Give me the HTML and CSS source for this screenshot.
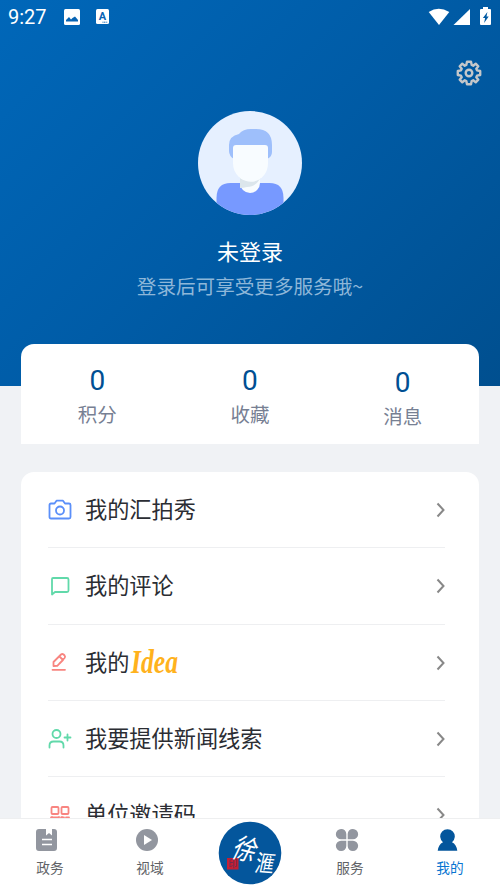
FILE: index.html
```html
<!DOCTYPE html>
<html lang="zh-CN">
<head>
<meta charset="utf-8">
<meta name="viewport" content="width=device-width">
<title>我的</title>
<link rel="stylesheet" href="styles.css">
</head>
<body>
<div class="app">
  <main class="content">
    <header class="hero">
      <div class="status">
        <span class="time">9:27</span>
        <svg class="photo" width="16" height="16" viewBox="0 0 16 16"><rect width="16" height="16" rx="1.5" fill="#fff"/><path d="M2 12.500V11l3-3 2 2.500 1.500-1.500L11 7.500l3 3.500v1.500z" fill="#0764b4"/></svg>
        <svg class="letter" width="13" height="15" viewBox="0 0 13 15"><rect width="13" height="15" rx="1.5" fill="#fff"/><text x="6.500" y="10.500" text-anchor="middle" class="letter-text">A</text><path d="M6.500 13.200h5" stroke="#0764b4" stroke-width="1" stroke-dasharray="1 .6"/></svg>
        <svg class="signals" width="64" height="20" viewBox="0 0 64 20" fill="#fff"><path d="M.7 5.100Q10.500-1.800 21.300 5.100L11 17.900z"/><path d="M42 2v16H25.500z"/><path fill-rule="evenodd" d="M55 0h5v2h2q1 0 1 1v14q0 1-1 1h-9q-1 0-1-1V3q0-1 1-1h2zm4.400 5-4.500 6h2.200l-1 5 4.600-6.500h-2.200z"/></svg>
      </div>
      <svg class="gear" width="26" height="26" viewBox="-13 -13 26 26" fill="none" stroke="#c4c7ca" stroke-width="2.400" stroke-linejoin="round"><path d="M-2-11.200H2L2.700-8 4.200-7.300 6.700-9.300 9.300-6.700 7.300-4.200 8-2.700 11.200-2V2L8 2.700 7.300 4.200 9.300 6.700 6.700 9.300 4.200 7.300 2.700 8 2 11.200H-2L-2.700 8-4.200 7.300-6.700 9.300-9.300 6.700-7.300 4.200-8 2.700-11.200 2V-2L-8-2.700-7.300-4.200-9.300-6.700-6.700-9.300-4.200-7.300-2.700-8z"/><circle r="3.300"/></svg>
      <svg class="avatar" width="104" height="104" viewBox="0 0 104 104"><defs><clipPath id="face"><circle cx="52" cy="52" r="52"/></clipPath></defs><circle cx="52" cy="52" r="52" fill="#e6f0ff"/><g clip-path="url(#face)"><path d="M18.500 104V87q0-15 14-15h39q14 0 14 15v17z" fill="#7799ff"/><path d="M42 62v10a10 10 0 0 0 20 0V62z" fill="#f8fcff"/><path d="M42 67q10 7 20 1-5 8-13 8-4 1-7 1z" fill="#dce6ec"/><path d="M36 48q-5-3-5-8v-6q0-9 10-11 4-5 12-5h5q16 0 16 16v7q0 5-5 7z" fill="#9ebffb"/><path d="M35 37q0-3 3-3h29q3 0 3 3v15c0 11-7 18-17 18s-18-7-18-18z" fill="#f8fcff"/></g></svg>
      <h1 class="name">未登录</h1>
      <p class="hint">登录后可享受更多服务哦~</p>
    </header>
    <section class="stats">
      <div class="stat"><span class="count">0</span><span class="label">积分</span></div>
      <div class="stat"><span class="count">0</span><span class="label">收藏</span></div>
      <div class="stat lower"><span class="count">0</span><span class="label">消息</span></div>
    </section>
    <section class="menu">
      <div class="row"><svg class="icon" width="24" height="24" viewBox="0 0 24 24" stroke="#5b8ff9"><path d="M3 5.500h3.500l2-2.800h6.500l2 2.800H21q1.500 0 1.500 1.500v12q0 1.500-1.500 1.500H3Q1.500 20.500 1.500 19V7Q1.500 5.500 3 5.500z"/><circle cx="12" cy="12.500" r="4"/></svg><span>我的汇拍秀</span><svg class="arrow" width="10" height="16" viewBox="0 0 10 16"><path d="m1.500 1.500 6 6.500-6 6.500"/></svg></div>
      <div class="row"><svg class="icon" width="24" height="24" viewBox="0 0 24 24" stroke="#61d9aa"><path d="M4 20.500V5q0-1 1-1h14q1.500 0 1.500 1.500v11q0 1.500-1.500 1.500H7z"/></svg><span>我的评论</span><svg class="arrow" width="10" height="16" viewBox="0 0 10 16"><path d="m1.500 1.500 6 6.500-6 6.500"/></svg></div>
      <div class="row"><svg class="icon" width="24" height="24" viewBox="0 0 24 24" stroke="#f88580"><path d="M5.500 16v-4l7.500-7.500q1.300-1 2.600 0l1 1q1 1.300 0 2.500L9.300 15.800zM11.500 6.500l3.500 3.500-3.500 3.500M4.500 19.800h12.500"/></svg><span>我的</span><svg class="idea" width="52" height="32" viewBox="0 0 52 32"><text x="2" y="27" textLength="47" lengthAdjust="spacingAndGlyphs">Idea</text></svg><svg class="arrow" width="10" height="16" viewBox="0 0 10 16"><path d="m1.500 1.500 6 6.500-6 6.500"/></svg></div>
      <div class="row"><svg class="icon" width="24" height="24" viewBox="0 0 24 24" stroke="#61d9aa"><circle cx="8.500" cy="7" r="4"/><path d="M1.500 20.500v-2q0-4 4-4h6q4 0 4 4v2M16.500 10.500h6M19.500 7.500v6"/></svg><span>我要提供新闻线索</span><svg class="arrow" width="10" height="16" viewBox="0 0 10 16"><path d="m1.500 1.500 6 6.500-6 6.500"/></svg></div>
      <div class="row"><svg class="icon" width="24" height="24" viewBox="0 0 24 24" stroke="#f88580"><rect x="3.500" y="4" width="7" height="7" rx="1"/><rect x="13.500" y="4" width="7" height="7" rx="1"/><path d="M3 14.500h8M13 14.500h3m2 0h3M4 14v7h7v-7m3 0v7h6v-4"/></svg><span>单位邀请码</span><svg class="arrow" width="10" height="16" viewBox="0 0 10 16"><path d="m1.500 1.500 6 6.500-6 6.500"/></svg></div>
    </section>
  </main>
  <nav class="tabs">
    <div class="tab"><svg width="24" height="24" viewBox="0 0 24 24"><path d="M4 1h7v6.500l3-2.500 3 2.500V1h2q3 0 3 3v16q0 3-3 3H4q-3 0-3-3V4q0-3 3-3z" fill="#92969f"/><path d="M7 11.500h10M7 16.500h10" stroke="#fff" stroke-width="1.500"/></svg><span>政务</span></div>
    <div class="tab"><svg width="24" height="24" viewBox="0 0 24 24"><circle cx="12" cy="12" r="11" fill="#92969f"/><path d="m9 7 8 5-8 5z" fill="#fff"/></svg><span>视域</span></div>
    <div class="tab brand"><svg width="64" height="64" viewBox="0 0 64 64"><circle cx="32" cy="32" r="31.300" fill="#04569c"/><rect x="9" y="37" width="11.500" height="11.500" fill="#c51e31"/><text class="seal" x="14.700" y="46" text-anchor="middle">印</text><text class="brush" transform="translate(12 35) rotate(14) skewX(-12) scale(.92 1.130)">徐</text><text class="brush second" transform="translate(36 50) rotate(4) skewX(-8) scale(.9 1.100)">滙</text></svg></div>
    <div class="tab"><svg width="24" height="24" viewBox="0 0 24 24" fill="#92969f"><path d="M6 1a5 5 0 0 1 5.300 5v5.300H6A5 5 0 0 1 6 1zM18 1a5 5 0 0 0-5.300 5v5.300H18A5 5 0 0 0 18 1zM6 23a5 5 0 0 0 5.300-5v-5.300H6A5 5 0 0 0 6 23zM18 23a5 5 0 0 1-5.300-5v-5.300H18A5 5 0 0 1 18 23z"/></svg><span>服务</span></div>
    <div class="tab active"><svg width="24" height="24" viewBox="0 0 24 24" fill="#04569c"><path d="M8 14.200a7.300 7.300 0 1 1 9 0q4.500 2 5.300 8.600H2.700q.8-6.600 5.300-8.600z"/></svg><span>我的</span></div>
  </nav>
</div>
</body>
</html>
```
FILE: styles.css
```css
* { box-sizing: border-box; }
body {
  margin: 0;
  font-family: "Noto Sans CJK SC", sans-serif;
  background: #f0f2f5;
}
svg { display: block; flex: none; }
.app { height: 888px; display: flex; flex-direction: column; overflow: hidden; }
.content { flex: 1; min-height: 0; overflow: hidden; }
.hero {
  height: 386px;
  display: flex;
  flex-direction: column;
  align-items: center;
  background: linear-gradient(135deg, #0067b9 0%, #005ca7 48%, #004f8f 100%);
}
.status { width: 100%; height: 34px; padding: 0 8px 0 8px; display: flex; align-items: center; }
.time { width: 56px; font: 20px/36px Roboto, sans-serif; color: #fff; }
.photo { margin-top: -1px; }
.letter { margin: -1px 0 0 16px; }
.letter-text { font: bold 11px Roboto, sans-serif; fill: #0764b4; }
.signals { margin-left: auto; margin-top: -1px; }
.gear { align-self: flex-end; margin: 26px 18px 0 0; }
.avatar { margin-top: 25px; }
.name { margin: 19px 0 0; font-size: 22px; line-height: 32px; font-weight: 400; color: #fff; }
.hint { margin: 6px 0 0; font-size: 19.600px; line-height: 28px; color: #8eb7d9; }
.stats {
  height: 100px;
  margin: -42px 21px 28px;
  display: grid;
  grid-template-columns: repeat(3, 1fr);
  background: #fff;
  border-radius: 13px 13px 0 0;
}
.stat { padding-top: 20px; display: flex; flex-direction: column; align-items: center; }
.stat.lower { padding-top: 22px; }
.count { font: 28px/34px Roboto, sans-serif; color: #004f93; }
.label { font-size: 19.500px; line-height: 30px; margin-top: 1px; color: #778093; }
.menu { margin: 0 21px; padding: 0 34px 0 27px; background: #fff; border-radius: 13px 13px 0 0; }
.row {
  height: 76.300px;
  display: flex;
  align-items: center;
  border-bottom: 1px solid #eeeff1;
  color: #2b2d33;
  font-size: 22.200px;
}
.row > span { margin-top: -3px; }
.icon { margin-right: 13px; fill: none; stroke-width: 1.800; stroke-linejoin: round; stroke-linecap: round; }
.arrow { margin: 1px -1px 0 auto; fill: none; stroke: #888; stroke-width: 2; }
.idea text { font: italic bold 33px "Liberation Serif", serif; fill: #ffb21d; }
.tabs { height: 70px; display: grid; grid-template-columns: repeat(5, 1fr); background: #fff; border-top: 1px solid #eeeff0; }
.tab { padding-top: 9px; display: flex; flex-direction: column; align-items: center; font-size: 13.700px; line-height: 20px; color: #606266; }
.tab:not(.brand) > svg { margin-left: -6px; }
.tab span { margin-top: 5px; }
.active { color: #0875d1; }
.brand { padding-top: 2px; }
.brush { font: 25px "Noto Sans CJK TC", sans-serif; fill: #fff; }
.second { font-size: 21px; }
.seal { font: 9px "Noto Sans CJK SC", sans-serif; fill: #5c315d; }
```
